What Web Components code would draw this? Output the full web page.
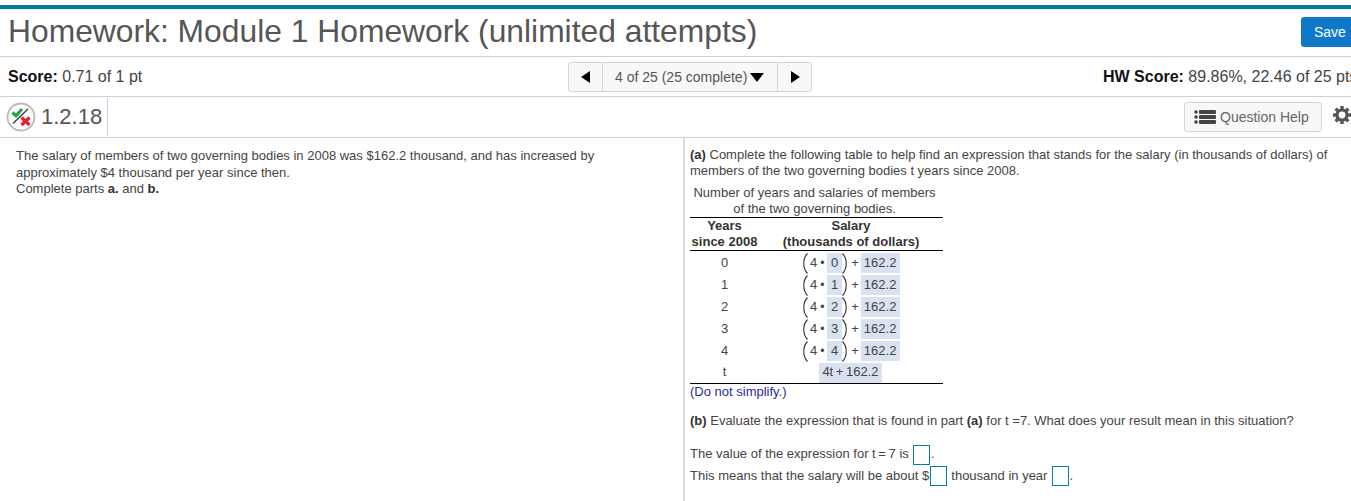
<!DOCTYPE html>
<html>
<head>
<meta charset="utf-8">
<title>Homework</title>
<style>
html, body { margin: 0; padding: 0; background: #fff; overflow: hidden; }
body { width: 1351px; height: 501px; font-family: "Liberation Sans", Arial, sans-serif; color: #333; }
</style>
</head>
<body>
<hw-page>
  <hw-title slot="title">Homework: Module 1 Homework (unlimited attempts)</hw-title>
  <hw-score slot="score"></hw-score>
  <hw-question slot="question"></hw-question>
  <hw-left slot="left"></hw-left>
  <hw-right slot="right"></hw-right>
</hw-page>

<script>
// Page frame
class HwPage extends HTMLElement {
    constructor() {
        super();
        this.attachShadow({ mode: 'open' }).innerHTML = `
            <style>
                :host { display: block; width: 1351px; height: 501px; overflow: hidden; box-sizing: border-box; padding-top: 5px; }
                .bar { height: 4px; background: #007fa3; }
                .columns { display: grid; grid-template-columns: 683px 668px; height: 363px; }
            </style>
            <div class="bar"></div>
            <slot name="title"></slot>
            <slot name="score"></slot>
            <slot name="question"></slot>
            <div class="columns">
                <slot name="left"></slot>
                <slot name="right"></slot>
            </div>
        `;
    }
}
customElements.define('hw-page', HwPage);

class HwTitle extends HTMLElement {
    constructor() {
        super();
        this.attachShadow({ mode: 'open' }).innerHTML = `
            <style>
                :host { display: flex; align-items: center; justify-content: space-between; height: 48px; box-sizing: border-box; padding: 0 0 0 8px; border-bottom: 1px solid #ccd0de; overflow: hidden; }
                h1 { margin: 0 0 3px; font-weight: normal; font-size: 31.8px; line-height: 40px; color: #565656; white-space: nowrap; }
                button { flex: none; width: 58px; height: 30px; margin: 0 -8px 2px 0; padding: 0 0 0 13px; text-align: left; border: 0; border-radius: 3px; background: #0f78c9; color: #fff; font: 14px "Liberation Sans", Arial, sans-serif; }
            </style>
            <h1><slot></slot></h1>
            <button>Save</button>
        `;
    }
}
customElements.define('hw-title', HwTitle);

class HwScore extends HTMLElement {
    constructor() {
        super();
        this.attachShadow({ mode: 'open' }).innerHTML = `
            <style>
                :host { display: grid; grid-template-columns: 560px 244px 1fr; align-items: center; height: 40px; box-sizing: border-box; padding-left: 8px; border-bottom: 1px solid #ccd0de; font-size: 16px; color: #444; white-space: nowrap; overflow: hidden; }
                b { color: #111; }
                .pager { display: flex; height: 30px; box-sizing: border-box; border: 1px solid #d4d4d4; border-radius: 3px; background: #f8f8f8; align-items: center; margin-top: 1px; }
                .nav { flex: none; height: 100%; display: flex; align-items: center; justify-content: center; box-sizing: border-box; }
                .nav.l { width: 34px; border-right: 1px solid #d4d4d4; }
                .nav.r { width: 34px; border-left: 1px solid #d4d4d4; }
                .mid { flex: 1; display: flex; align-items: center; padding-left: 12px; font-size: 14px; color: #555; gap: 3px; }
                .hw { justify-self: start; margin-left: 291px; }
                svg { display: block; }
            </style>
            <div><b>Score:</b> 0.71 of 1 pt</div>
            <div class="pager">
                <div class="nav l"><svg width="10" height="14"><path d="M9 1v12L0 7z" fill="#000"/></svg></div>
                <div class="mid">4 of 25 (25 complete)<svg width="14" height="9"><path d="M0 0h14L7 9z" fill="#000"/></svg></div>
                <div class="nav r"><svg width="10" height="14"><path d="M1 1v12l9-6z" fill="#000"/></svg></div>
            </div>
            <div class="hw"><b>HW Score:</b> 89.86%, 22.46 of 25 pts</div>
        `;
    }
}
customElements.define('hw-score', HwScore);

class HwQuestion extends HTMLElement {
    constructor() {
        super();
        this.attachShadow({ mode: 'open' }).innerHTML = `
            <style>
                :host { display: flex; align-items: stretch; height: 41px; box-sizing: border-box; border-bottom: 1px solid #ccd0de; overflow: hidden; }
                .id { display: flex; align-items: center; gap: 5px; width: 108px; box-sizing: border-box; padding-left: 6px; border-right: 1px solid #ccd0de; font-size: 22px; color: #565656; margin-top: 1px; margin-bottom: 1px; }
                .spacer { flex: 1; }
                .help { align-self: center; display: flex; align-items: center; gap: 4px; width: 138px; height: 30px; box-sizing: border-box; padding-left: 9px; border: 1px solid #d4d4d4; border-radius: 3px; background: #f8f8f8; font-size: 14px; color: #666; }
                .gear { align-self: center; margin: 0 0 4px 11px; width: 18px; flex: none; }
                svg { display: block; }
            </style>
            <div class="id">
                <svg width="30" height="30" viewBox="0 0 30 30">
                    <circle cx="15" cy="15" r="13.5" fill="#fff" stroke="#bbb" stroke-width="1.8"/>
                    <path d="M6.500 10.500l3.500 3.200L16 7" fill="none" stroke="#1fa34a" stroke-width="3.200"/>
                    <path d="M7 21.500L22 7" stroke="#333" stroke-width="1.200"/>
                    <path d="M15.500 15.500l8 7.500M23.500 15.500l-8 7.500" stroke="#e0202c" stroke-width="3.200"/>
                </svg>
                <span>1.2.18</span>
            </div>
            <div class="spacer"></div>
            <div class="help">
                <svg width="22" height="14" viewBox="0 0 22 14" fill="#444">
                    <circle cx="2" cy="2" r="1.8"/><circle cx="2" cy="7" r="1.8"/><circle cx="2" cy="12" r="1.8"/>
                    <rect x="5" y="0" width="17" height="4" rx="1"/><rect x="5" y="5" width="17" height="4" rx="1"/><rect x="5" y="10" width="17" height="4" rx="1"/>
                </svg>
                <span>Question Help</span>
            </div>
            <div class="gear">
                <svg width="18" height="18" viewBox="-9 -9 18 18" fill="#555">
                    <circle r="5" fill="none" stroke="#555" stroke-width="3.200"/>
                    <g id="teeth">
                        <rect x="-1.700" y="-9" width="3.400" height="3"/>
                        <rect x="-1.700" y="-9" width="3.400" height="3" transform="rotate(45)"/>
                        <rect x="-1.700" y="-9" width="3.400" height="3" transform="rotate(90)"/>
                        <rect x="-1.700" y="-9" width="3.400" height="3" transform="rotate(135)"/>
                        <rect x="-1.700" y="-9" width="3.400" height="3" transform="rotate(180)"/>
                        <rect x="-1.700" y="-9" width="3.400" height="3" transform="rotate(225)"/>
                        <rect x="-1.700" y="-9" width="3.400" height="3" transform="rotate(270)"/>
                        <rect x="-1.700" y="-9" width="3.400" height="3" transform="rotate(315)"/>
                    </g>
                </svg>
            </div>
        `;
    }
}
customElements.define('hw-question', HwQuestion);

class HwLeft extends HTMLElement {
    constructor() {
        super();
        this.attachShadow({ mode: 'open' }).innerHTML = `
            <style>
                :host { display: block; box-sizing: border-box; padding: 10px 0 0 16px; font-size: 13px; line-height: 16.5px; color: #444; }
                p { margin: 0; width: 600px; }
                b { color: #333; }
            </style>
            <p>The salary of members of two governing bodies in 2008 was $162.2 thousand, and has increased by approximately $4 thousand per year since then.</p>
            <p>Complete parts <b>a.</b> and <b>b.</b></p>
        `;
    }
}
customElements.define('hw-left', HwLeft);

// one row of the salary table, n is the year
class HwRow extends HTMLElement {
    constructor() {
        super();
        const n = this.getAttribute('n');
        this.attachShadow({ mode: 'open' }).innerHTML = `
            <style>
                :host { display: grid; grid-template-columns: 69px 1fr; height: 22px; align-items: center; font-size: 13px; color: #444; text-align: center; }
                .v { display: flex; align-items: center; padding-left: 44px; height: 22px; }
                .paren { display: block; flex: none; }
                .box { background: #d9e2f1; height: 20px; line-height: 20px; display: block; flex: none; }
                .n { width: 15px; }
                .c { width: 39px; margin-left: 2px; box-sizing: border-box; padding-left: 3px; text-align: left; }
                .four { margin-left: 2px; }
                .dot { width: 10px; font-size: 12px; }
                .plus { margin-left: 4px; }
            </style>
            <div>${n}</div>
            <div class="v">
                <svg class="paren" width="5" height="21" viewBox="0 0 5 21"><path d="M4.500 0.500C1 4 .8 7 .8 10.500S1 17 4.500 20.500" fill="none" stroke="#333" stroke-width="1.100"/></svg>
                <span class="four">4</span><span class="dot">&#8226;</span>
                <span class="box n">${n}</span>
                <svg class="paren" width="5" height="21" viewBox="0 0 5 21"><path d="M.5 0.500C4 4 4.200 7 4.200 10.500S4 17 .5 20.500" fill="none" stroke="#333" stroke-width="1.100"/></svg>
                <span class="plus">+</span>
                <span class="box c">162.2</span>
            </div>
        `;
    }
}
customElements.define('hw-row', HwRow);

class HwAnswer extends HTMLElement {
    constructor() {
        super();
        this.attachShadow({ mode: 'open' }).innerHTML = `
            <style>
                :host { display: inline-block; width: 17px; height: 20px; box-sizing: border-box; border: 1px solid #007fa3; background: #fff; vertical-align: middle; margin: 0 .5px 0 1px; }
            </style>
        `;
    }
}
customElements.define('hw-answer', HwAnswer);

class HwTable extends HTMLElement {
    constructor() {
        super();
        this.attachShadow({ mode: 'open' }).innerHTML = `
            <style>
                :host { display: block; width: 253px; font-size: 13px; line-height: 16px; color: #444; }
                .cap { text-align: center; padding: 6px 4px 0 0; }
                .head { display: grid; grid-template-columns: 69px 1fr; border-top: 1px solid #000; border-bottom: 1px solid #000; text-align: center; font-weight: bold; color: #333; height: 32px; }
                .rows { border-bottom: 1px solid #000; padding-top: 1px; }
                .last { display: grid; grid-template-columns: 69px 1fr; height: 21px; align-items: end; text-align: center; }
                .last span { display: block; width: 63px; height: 20px; line-height: 18px; background: #d9e2f1; margin-left: 60px; word-spacing: -1px; }
                .last div:first-child { line-height: 18px; height: 20px; }
            </style>
            <div class="cap">Number of years and salaries of members<br>of the two governing bodies.</div>
            <div class="head"><div>Years<br>since 2008</div><div>Salary<br>(thousands of dollars)</div></div>
            <div class="rows">
                <slot></slot>
                <div class="last"><div>t</div><div><span>4t + 162.2</span></div></div>
            </div>
        `;
    }
}
customElements.define('hw-table', HwTable);

class HwRight extends HTMLElement {
    constructor() {
        super();
        this.attachShadow({ mode: 'open' }).innerHTML = `
            <style>
                :host { display: block; box-sizing: border-box; border-left: 2px solid #dcdcdc; padding: 9px 0 0 5px; font-size: 13px; line-height: 16px; color: #444; white-space: nowrap; }
                b { color: #333; }
                p { margin: 0; }
                .note { color: #2a2a9a; }
                .b { margin-top: 13px; }
                .val { margin-top: 14px; line-height: 21px; }
                .eq { word-spacing: -1px; }
            </style>
            <p><b>(a)</b> Complete the following table to help find an expression that stands for the salary (in thousands of dollars) of<br>members of the two governing bodies t years since 2008.</p>
            <hw-table>
                <hw-row n="0"></hw-row><hw-row n="1"></hw-row><hw-row n="2"></hw-row><hw-row n="3"></hw-row><hw-row n="4"></hw-row>
            </hw-table>
            <p class="note">(Do not simplify.)</p>
            <p class="b"><b>(b)</b> Evaluate the expression that is found in part <b>(a)</b> for t =7. What does your result mean in this situation?</p>
            <p class="val">The value of the expression for <span class="eq">t = 7</span> is <hw-answer></hw-answer>.<br>This means that the salary will be about $<hw-answer></hw-answer> thousand in year <hw-answer></hw-answer>.</p>
        `;
    }
}
customElements.define('hw-right', HwRight);
</script>
</body>
</html>
